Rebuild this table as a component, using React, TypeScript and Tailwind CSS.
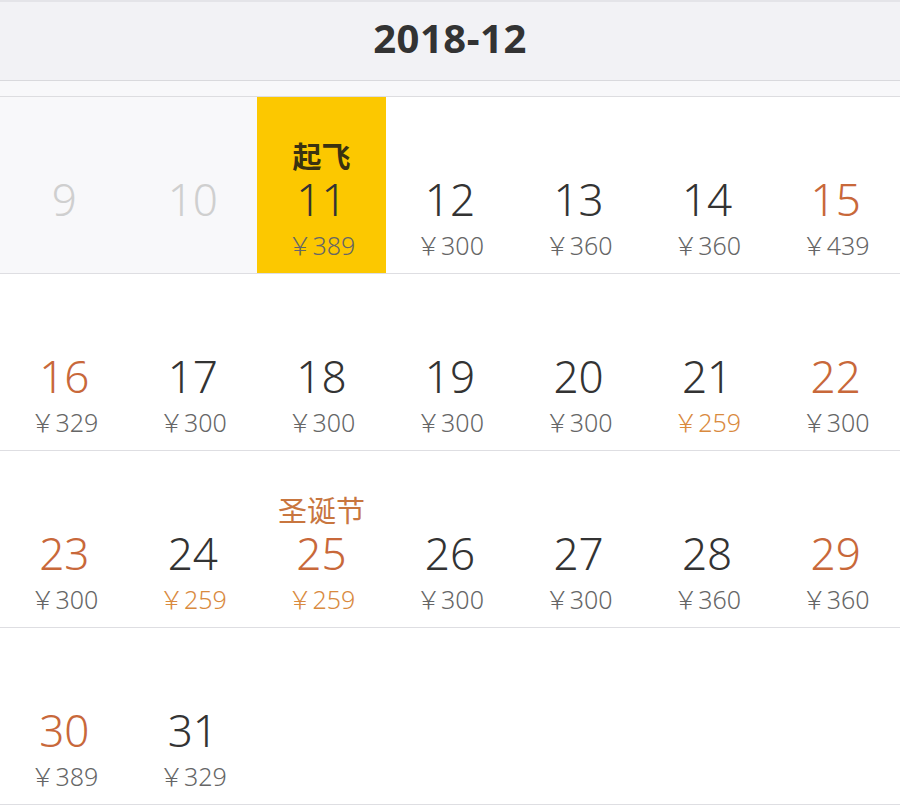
import React from 'react';

type Day = {
  day?: number;
  price?: number;
  label?: string;
  disabled?: boolean;
  selected?: boolean;
  weekend?: boolean;
  cheap?: boolean;
  holiday?: boolean;
};

const weeks: Day[][] = [
  [
    { day: 9, disabled: true },
    { day: 10, disabled: true },
    { day: 11, price: 389, label: '起飞', selected: true },
    { day: 12, price: 300 },
    { day: 13, price: 360 },
    { day: 14, price: 360 },
    { day: 15, price: 439, weekend: true },
  ],
  [
    { day: 16, price: 329, weekend: true },
    { day: 17, price: 300 },
    { day: 18, price: 300 },
    { day: 19, price: 300 },
    { day: 20, price: 300 },
    { day: 21, price: 259, cheap: true },
    { day: 22, price: 300, weekend: true },
  ],
  [
    { day: 23, price: 300, weekend: true },
    { day: 24, price: 259, cheap: true },
    { day: 25, price: 259, cheap: true, holiday: true, label: '圣诞节' },
    { day: 26, price: 300 },
    { day: 27, price: 300 },
    { day: 28, price: 360 },
    { day: 29, price: 360, weekend: true },
  ],
  [
    { day: 30, price: 389, weekend: true },
    { day: 31, price: 329 },
    {},
    {},
    {},
    {},
    {},
  ],
];

function Cell({ d }: { d: Day }) {
  const bg = d.selected ? 'bg-[#fcc800]' : d.disabled ? 'bg-[#f8f8fa]' : 'bg-white';
  const numColor = d.disabled
    ? 'text-[#cfcfcf]'
    : d.weekend || d.holiday
    ? 'text-[#c8683a]'
    : 'text-[#333333]';
  const priceColor = d.cheap ? 'text-[#d98a3e]' : 'text-[#666666]';

  return (
    <div className={`flex flex-col items-center pt-[44px] ${bg}`}>
      <div
        className={`h-[32px] leading-[32px] text-[29px] ${
          d.selected ? 'font-bold text-[#3a3210]' : 'text-[#c8763f]'
        }`}
      >
        {d.label}
      </div>
      {d.day !== undefined && (
        <div className={`h-[52px] leading-[52px] text-[44px] font-light ${numColor}`}>
          {d.day}
        </div>
      )}
      {d.price !== undefined && (
        <div className={`mt-[5px] leading-[30px] text-[25px] font-light ${priceColor}`}>
          ￥{d.price}
        </div>
      )}
    </div>
  );
}

export default function App() {
  return (
    <div
      className="w-[900px] h-[805px] overflow-hidden bg-white"
      style={{ fontFamily: '"Noto Sans", "Noto Sans CJK SC", sans-serif' }}
    >
      {/* Month header */}
      <div className="h-[81px] pb-[6px] bg-[#f2f2f5] border-t-2 border-[#e4e4e8] border-b border-b-[#d9d9dd] flex items-center justify-center">
        <span className="text-[40px] font-bold text-[#333333] tracking-[0.5px]">2018-12</span>
      </div>
      <div className="h-[16px] bg-[#f8f8fa] border-b border-[#dddde0]" />

      {/* Days */}
      {weeks.map((week, i) => (
        <div key={i} className="grid grid-cols-7 h-[177px] border-b border-[#dedee2]">
          {week.map((d, j) => (
            <Cell key={j} d={d} />
          ))}
        </div>
      ))}
    </div>
  );
}
